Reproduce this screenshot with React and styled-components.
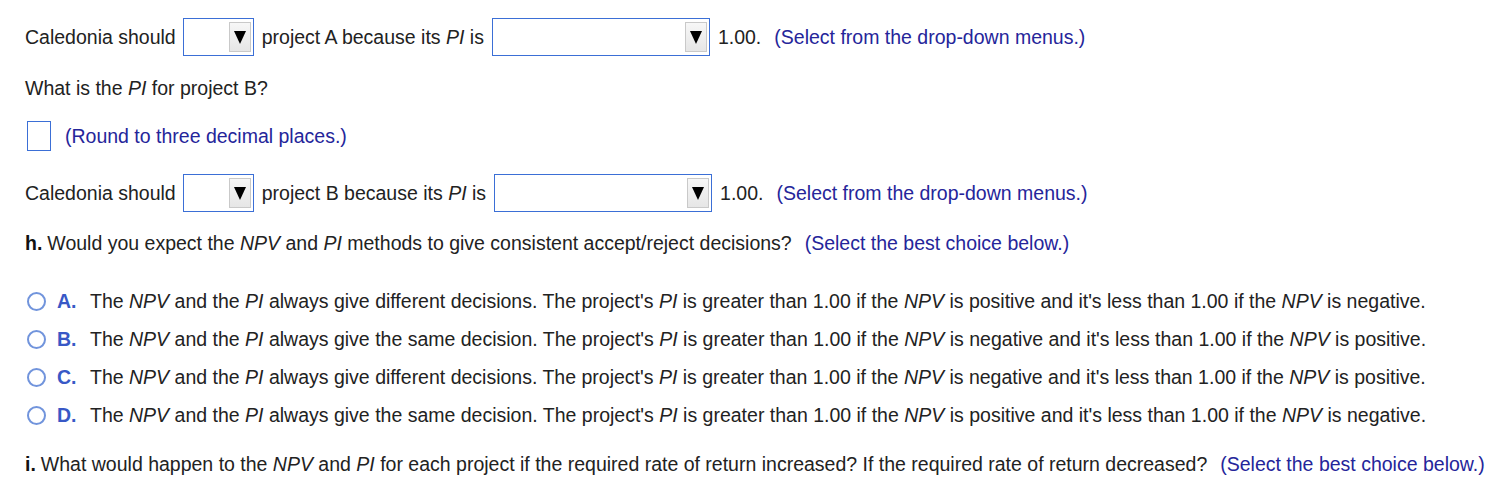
import React from 'react'
import styled, { createGlobalStyle } from 'styled-components'

const Global = createGlobalStyle`
  body {
    margin: 0;
    background: #fff;
    font-family: 'Liberation Sans', Arial, sans-serif;
    font-size: 19.5px;
    color: #222;
  }
`
const Page = styled.div`
  padding: 18px 0 0 25px;
`
const Row = styled.div`
  display: flex;
  align-items: center;
  height: ${p => p.h || 22}px;
  margin-top: ${p => p.mt || 0}px;
  white-space: nowrap;
`
const Hint = styled.span`
  color: #25259a;
  margin-left: ${p => p.ml || 0}px;
`
const Drop = styled.div`
  box-sizing: border-box;
  width: ${p => p.w}px;
  height: 38px;
  border: 1px solid #3b6fd6;
  background: #fff;
  display: flex;
  justify-content: flex-end;
  align-items: center;
  padding-right: 2px;
  margin: 0 ${p => p.mr || 8}px 0 ${p => p.ml || 7}px;
`
const Arrow = styled.div`
  box-sizing: border-box;
  width: 22px;
  height: 30px;
  border: 1px solid #c9c9c9;
  background: linear-gradient(#f7f7f7, #e6e6e6);
  display: flex;
  align-items: center;
  justify-content: center;
  &::after {
    content: '';
    border-left: 6.5px solid transparent;
    border-right: 6.5px solid transparent;
    border-top: 13px solid #000;
  }
`
const Blank = styled.div`
  box-sizing: border-box;
  width: 24px;
  height: 30px;
  border: 1px solid #3b6fd6;
  margin: 0 14px 0 2px;
`
const Lead = styled.b`
  color: #111;
  margin-right: 5px;
`
const Choice = styled.div`
  display: flex;
  align-items: center;
  height: 38px;
  white-space: nowrap;
`
const Radio = styled.span`
  box-sizing: border-box;
  width: 19px;
  height: 19px;
  border: 2px solid #7194dc;
  border-radius: 50%;
  margin: 0 11px 0 2px;
`
const Letter = styled.b`
  color: #3858c6;
  width: 33px;
`
const Dropdown = ({ w, ml, mr }) => (
  <Drop w={w} ml={ml} mr={mr}>
    <Arrow />
  </Drop>
)

const choices = [
  ['A.', 'different', 'positive', 'negative'],
  ['B.', 'the same', 'negative', 'positive'],
  ['C.', 'different', 'negative', 'positive'],
  ['D.', 'the same', 'positive', 'negative'],
]

export default function App() {
  return (
    <Page>
      <Global />
      <Row h={38}>
        Caledonia should <Dropdown w={71} /> project A because its&nbsp;<i>PI</i>&nbsp;is
        <Dropdown w={218} ml={8} /> 1.00.<Hint ml={13}>(Select from the drop-down menus.)</Hint>
      </Row>
      <Row mt={21}>What is the&nbsp;<i>PI</i>&nbsp;for project B?</Row>
      <Row h={30} mt={22}>
        <Blank />
        <Hint>(Round to three decimal places.)</Hint>
      </Row>
      <Row h={38} mt={23}>
        Caledonia should <Dropdown w={71} /> project B because its&nbsp;<i>PI</i>&nbsp;is
        <Dropdown w={218} ml={8} /> 1.00.<Hint ml={13}>(Select from the drop-down menus.)</Hint>
      </Row>
      <Row mt={20}>
        <Lead>h.</Lead>Would you expect the&nbsp;<i>NPV</i>&nbsp;and&nbsp;<i>PI</i>&nbsp;methods to give consistent accept/reject decisions?
        <Hint ml={13}>(Select the best choice below.)</Hint>
      </Row>
      <div style={{ marginTop: 28 }}>
        {choices.map(([l, d, a, b]) => (
          <Choice key={l}>
            <Radio />
            <Letter>{l}</Letter>
            The&nbsp;<i>NPV</i>&nbsp;and the&nbsp;<i>PI</i>&nbsp;always give {d} decision{d === 'different' ? 's' : ''}. The project's&nbsp;<i>PI</i>&nbsp;is greater than 1.00 if the&nbsp;<i>NPV</i>&nbsp;is {a} and it's less than 1.00 if the&nbsp;<i>NPV</i>&nbsp;is {b}.
          </Choice>
        ))}
      </div>
      <Row mt={19}>
        <Lead>i.</Lead>What would happen to the&nbsp;<i>NPV</i>&nbsp;and&nbsp;<i>PI</i>&nbsp;for each project if the required rate of return increased? If the required rate of return decreased?
        <Hint ml={13}>(Select the best choice below.)</Hint>
      </Row>
    </Page>
  )
}
